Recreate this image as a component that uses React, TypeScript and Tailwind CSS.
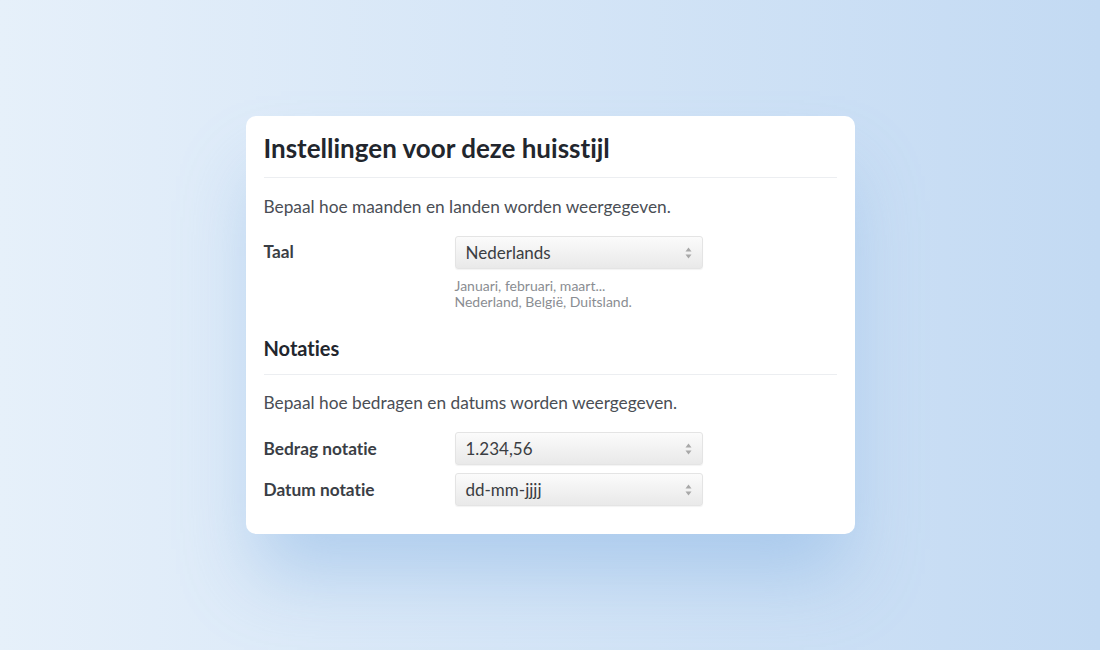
import React from "react";

function Arrows() {
  return (
    <svg width="9" height="14" viewBox="0 0 9 14" className="shrink-0">
      <path d="M4.5 1.5 L7.5 5.5 L1.5 5.5 Z" fill="#a8a8a8" />
      <path d="M4.5 12.5 L7.5 8.5 L1.5 8.5 Z" fill="#a8a8a8" />
    </svg>
  );
}

function SelectBox({ value }: { value: string }) {
  return (
    <div className="flex h-[33px] w-[248px] items-center justify-between rounded-[3px] border border-[#e4e4e4] bg-gradient-to-b from-[#fbfbfb] to-[#e9e9e9] pl-[10px] pr-[9px] text-[17px] text-[#3a3d42] shadow-[0_1px_1px_rgba(0,0,0,0.05)]">
      <span>{value}</span>
      <Arrows />
    </div>
  );
}

export default function App() {
  return (
    <div
      className="flex h-[650px] w-[1100px] items-start justify-center overflow-hidden bg-gradient-to-r from-[#e6f0fa] to-[#c3daf3] [font-variant-ligatures:none]"
      style={{ fontFamily: "Lato, 'Noto Sans', sans-serif" }}
    >
      <div className="mt-[116px] w-[609px] rounded-[10px] bg-white px-[18px] pb-[28px] pt-[17px] shadow-[0_50px_70px_-10px_rgba(120,170,225,0.42)]">
        <h1 className="text-[26px] font-bold leading-[30px] text-[#22262d]">
          Instellingen voor deze huisstijl
        </h1>
        <div className="mt-[14px] h-px bg-[#eceef1]" />
        <p className="mt-[19px] text-[17.3px] leading-[20px] text-[#4a4e55]">
          Bepaal hoe maanden en landen worden weergegeven.
        </p>
        <div className="mt-[19px] grid grid-cols-[191px_1fr] items-start">
          <div className="pt-[6px] text-[17.3px] font-bold leading-[20px] text-[#3a3e45]">Taal</div>
          <div>
            <SelectBox value="Nederlands" />
            <div className="mt-[9px] text-[14px] leading-[16px] text-[#8a8d92]">
              <div>Januari, februari, maart...</div>
              <div>Nederland, België, Duitsland.</div>
            </div>
          </div>
        </div>

        <h2 className="mt-[26px] text-[20px] font-bold leading-[24px] text-[#22262d]">Notaties</h2>
        <div className="mt-[14px] h-px bg-[#eceef1]" />
        <p className="mt-[18px] text-[17.3px] leading-[20px] text-[#4a4e55]">
          Bepaal hoe bedragen en datums worden weergegeven.
        </p>
        <div className="mt-[19px] grid grid-cols-[191px_1fr] items-center gap-y-[8px]">
          <div className="text-[17.3px] font-bold leading-[20px] text-[#3a3e45]">Bedrag notatie</div>
          <SelectBox value="1.234,56" />
          <div className="text-[17.3px] font-bold leading-[20px] text-[#3a3e45]">Datum notatie</div>
          <SelectBox value="dd-mm-jjjj" />
        </div>
      </div>
    </div>
  );
}
